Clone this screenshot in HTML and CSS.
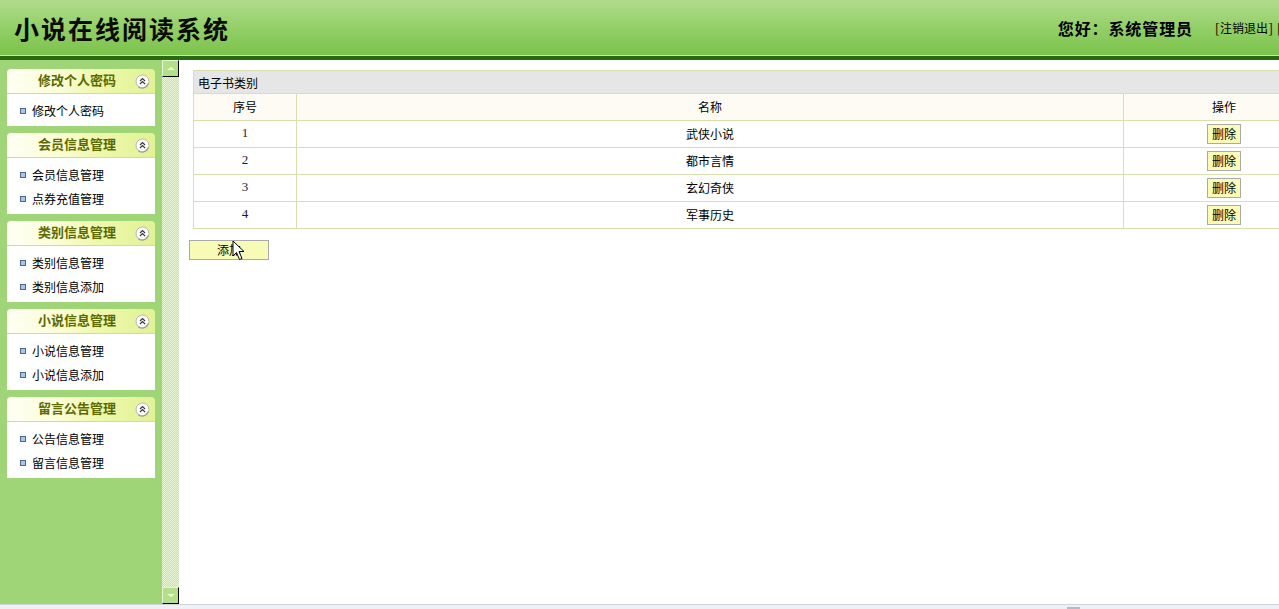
FILE: index.html
```html
<!DOCTYPE html>
<html lang="zh-CN">
<head>
    <meta charset="UTF-8">
    <title>小说在线阅读系统</title>
    <link rel="stylesheet" href="styles.css">
</head>
<body>
    <div class="top">
        <h1 class="brand">小说在线阅读系统</h1>
        <div class="user">
            <span class="hello">您好：系统管理员</span>
            <span class="link"><b>[</b>注销退出<b>]</b></span>
            <span class="link"><b>[</b>修改密码<b>]</b></span>
        </div>
    </div>
    <div class="main">
        <aside class="side">
            <div class="menu">
                <div class="panel">
                    <div class="panel-head"><span class="panel-title">修改个人密码</span><span class="fold"></span></div>
                    <ul class="panel-body">
                        <li>修改个人密码</li>
                    </ul>
                </div>
                <div class="panel">
                    <div class="panel-head"><span class="panel-title">会员信息管理</span><span class="fold"></span></div>
                    <ul class="panel-body">
                        <li>会员信息管理</li>
                        <li>点券充值管理</li>
                    </ul>
                </div>
                <div class="panel">
                    <div class="panel-head"><span class="panel-title">类别信息管理</span><span class="fold"></span></div>
                    <ul class="panel-body">
                        <li>类别信息管理</li>
                        <li>类别信息添加</li>
                    </ul>
                </div>
                <div class="panel">
                    <div class="panel-head"><span class="panel-title">小说信息管理</span><span class="fold"></span></div>
                    <ul class="panel-body">
                        <li>小说信息管理</li>
                        <li>小说信息添加</li>
                    </ul>
                </div>
                <div class="panel">
                    <div class="panel-head"><span class="panel-title">留言公告管理</span><span class="fold"></span></div>
                    <ul class="panel-body">
                        <li>公告信息管理</li>
                        <li>留言信息管理</li>
                    </ul>
                </div>
            </div>
            <div class="bar">
                <div class="bar-btn up"></div>
                <div class="bar-btn down"></div>
            </div>
        </aside>
        <section class="content">
            <table class="grid">
                <tr><td class="caption" colspan="3">电子书类别</td></tr>
                <tr class="head"><td class="c1">序号</td><td class="c2">名称</td><td class="c3">操作</td></tr>
                <tr><td class="num">1</td><td>武侠小说</td><td><button class="del">删除</button></td></tr>
                <tr><td class="num">2</td><td>都市言情</td><td><button class="del">删除</button></td></tr>
                <tr><td class="num">3</td><td>玄幻奇侠</td><td><button class="del">删除</button></td></tr>
                <tr><td class="num">4</td><td>军事历史</td><td><button class="del">删除</button></td></tr>
            </table>
            <div class="actions">
                <button class="add">添加</button>
                <svg class="pointer" width="14" height="21" viewBox="0 0 14 21">
                    <path d="M1 1 L1 16 L4.5 12.5 L7.5 19.5 L10 18.5 L7 11.5 L12 11.5 Z" fill="#fff" stroke="#000" stroke-width="1" stroke-linejoin="miter"/>
                </svg>
            </div>
        </section>
    </div>
    <div class="hscroll"><span class="thumb"></span></div>
    <script>
        // fold icons are the same everywhere, drawn once here
        var icon = '<svg width="15" height="15" viewBox="0 0 15 15">' +
            '<circle cx="7.5" cy="7.5" r="6.5" fill="#fff" stroke="#b9b9b9"/>' +
            '<path d="M13.2 9.5 A6.5 6.5 0 0 1 3 12.6" fill="none" stroke="#9a9a9a" stroke-width="1.2"/>' +
            '<path d="M5 7 7.5 4.6 10 7 M5 10 7.5 7.6 10 10" fill="none" stroke="#333" stroke-width="1.1"/></svg>';
        document.querySelectorAll('.fold').forEach(function (el) { el.innerHTML = icon; });
    </script>
</body>
</html>
```

FILE: styles.css
```css
html, body {
    margin: 0;
    padding: 0;
    height: 100%;
    overflow: hidden;
}
body {
    background: #fff;
    font-family: "Noto Sans CJK SC", "DejaVu Sans", sans-serif;
    font-size: 12px;
    color: #000;
}
.top {
    height: 55px;
    display: flex;
    align-items: center;
    background: linear-gradient(#b2db8d, #93d068 50%, #7bc24c);
    border-bottom: 1px solid #c9eaa2;
    box-shadow: 0 4px 0 #276a12;
    margin-bottom: 4px;
    overflow: hidden;
    white-space: nowrap;
}
.brand {
    margin: 0 0 0 14px;
    font-size: 25px;
    font-weight: bold;
    letter-spacing: 2px;
    color: #0b0b00;
}
.user {
    margin-left: auto;
    margin-right: -60px;
    display: flex;
    align-items: center;
    padding-top: 1px;
}
.hello {
    font-size: 16px;
    font-weight: bold;
    letter-spacing: 0.9px;
    margin-right: 22px;
}
.link {
    font-size: 12px;
    margin-right: 4px;
}
.link b {
    font-family: "Liberation Serif", serif;
    font-weight: normal;
    font-size: 15px;
    color: #3a2a00;
}
.main {
    height: 544px;
    display: flex;
}
.side {
    width: 179px;
    display: flex;
    background: #9fd576;
    flex: none;
}
.menu {
    width: 162px;
    padding: 9px 0 0 7px;
    box-sizing: border-box;
}
.panel {
    width: 148px;
    margin-bottom: 7px;
}
.panel-head {
    height: 24px;
    display: flex;
    align-items: center;
    border-radius: 4px 4px 0 0;
    border-bottom: 1px solid #cfd7b4;
    background: linear-gradient(90deg, #fffff4, #fbfdd6 35%, #eef8ae 60%, #e2f294);
}
.panel-title {
    flex: 1;
    text-align: center;
    font-size: 13px;
    font-weight: bold;
    color: #5d6a00;
    padding-left: 12px;
    padding-bottom: 3px;
}
.fold {
    width: 15px;
    height: 15px;
    margin-right: 5px;
    display: flex;
}
.panel-body {
    list-style: none;
    margin: 0;
    padding: 4px 0;
    background: #fff;
}
.panel-body li {
    height: 24px;
    line-height: 24px;
    padding-left: 13px;
    padding-top: 1px;
    box-sizing: border-box;
    display: flex;
    align-items: center;
}
.panel-body li::before {
    content: "";
    width: 4px;
    height: 4px;
    border: 1px solid #4d6790;
    background: #a9c3ea;
    margin-right: 6px;
}
.bar {
    width: 17px;
    display: flex;
    flex-direction: column;
    justify-content: space-between;
    background-color: #e6f4d4;
    background-image: conic-gradient(#c6e6a2 25%, transparent 0 50%, #c6e6a2 0 75%, transparent 0);
    background-size: 2px 2px;
}
.bar-btn {
    height: 15px;
    width: 15px;
    background: #b3df88;
    border: 1px solid #e4f6cf;
    border-right-color: #000;
    border-bottom-color: #000;
    position: relative;
}
.bar-btn.up::after {
    content: "";
    position: absolute;
    left: 4px;
    top: 6px;
    border: 4px solid transparent;
    border-top: 0;
    border-bottom: 3px solid #e9f8d8;
}
.bar-btn.down::after {
    content: "";
    position: absolute;
    left: 4px;
    top: 6px;
    border: 4px solid transparent;
    border-bottom: 0;
    border-top: 3px solid #e9f8d8;
}
.content {
    flex: 1;
    padding: 10px 0 0 14px;
    min-width: 0;
}
.grid {
    width: 1132px;
    border-collapse: collapse;
}
.grid td {
    border: 1px solid #d8e0ae;
    height: 24px;
    padding: 0 0 2px;
    text-align: center;
}
.grid .caption {
    height: 22px;
    padding: 0 0 0 4px;
    background: #e6e6e6;
    text-align: left;
}
.grid .head td {
    background: #fefbf4;
}
.c1 { width: 102px; }
.c2 { width: 826px; }
.num {
    font-family: "Liberation Serif", serif;
    font-size: 13px;
    color: #1a1a3a;
}
.del {
    height: 20px;
    width: 34px;
    padding: 0;
    background: #fafbb6;
    border: 1px solid #aaa;
    font-family: inherit;
    font-size: 12px;
    display: block;
    margin: 1px auto 0;
}
.actions {
    position: relative;
    margin: 11px 0 0 -4px;
}
.add {
    width: 80px;
    height: 20px;
    padding: 0 0 1px;
    background: #f7fbb5;
    border: 1px solid #aaa;
    font-family: inherit;
    font-size: 12px;
}
.pointer {
    position: absolute;
    left: 43px;
    top: 0;
}
.hscroll {
    height: 4px;
    border-top: 1px solid #cfd3da;
    background: #eef0f5;
    position: relative;
}
.thumb {
    position: absolute;
    left: 1067px;
    top: 2px;
    width: 13px;
    height: 2px;
    background: #b6bac4;
}
```
